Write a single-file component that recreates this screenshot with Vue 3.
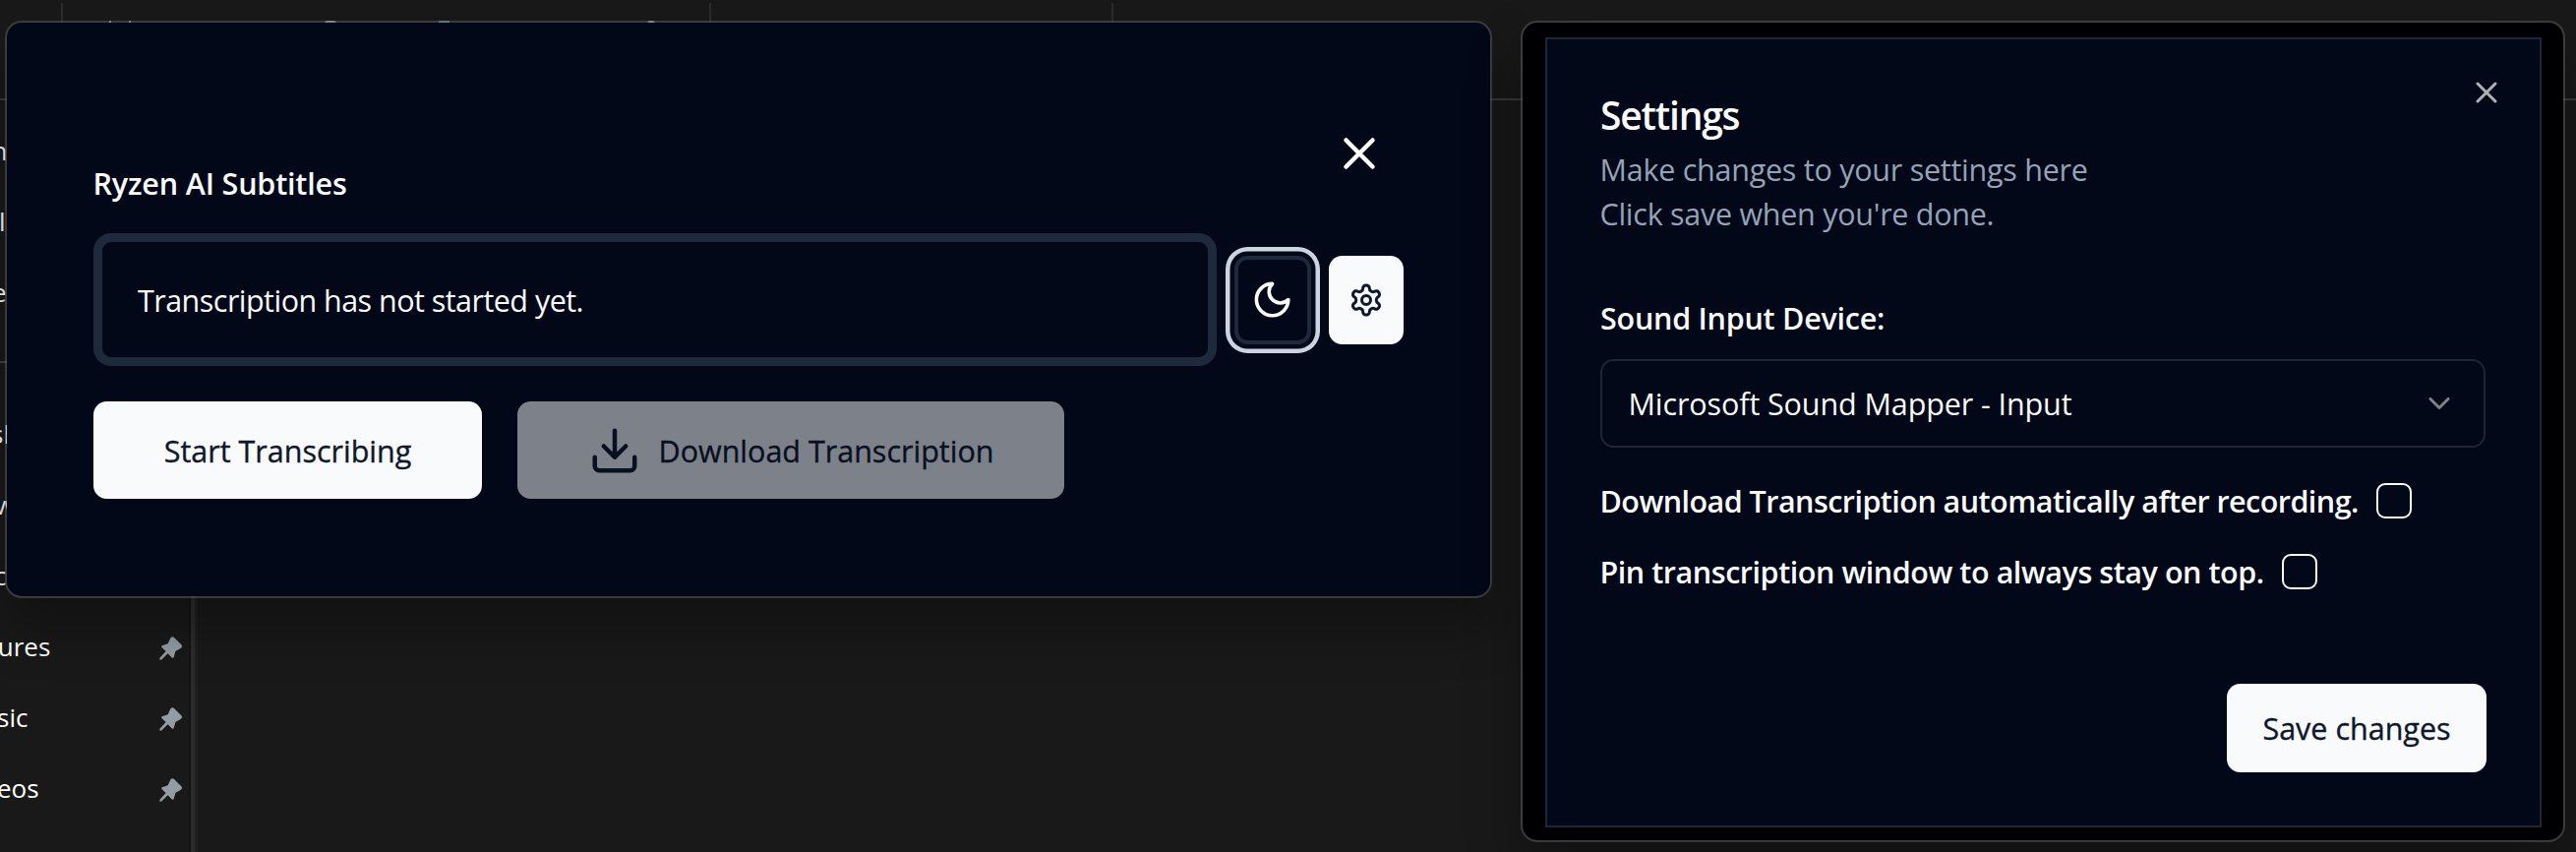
<script setup>
const places = [
  { label: 'n', shift: -8.5 },
  { label: 'l', shift: -1 },
  { label: 'e', shift: -8 },
  { label: '', shift: 0, rule: true },
  { label: 'sk', shift: -9 },
  { label: 'w', shift: -5 },
  { label: 'c', shift: -6 },
  { label: 'tures', shift: -11.5, pinned: true },
  { label: 'sic', shift: -3, pinned: true },
  { label: 'eos', shift: -3, pinned: true },
]
</script>

<template>
  <div class="desktop">
    <div class="toolbar">
      <i class="tick t1"></i><i class="tick t2"></i><i class="tick t3"></i>
      <i class="glyph g1"></i><i class="glyph g2"></i><i class="glyph g3"></i><i class="glyph g4"></i><i class="glyph g5"></i>
    </div>
    <nav class="places">
      <div v-for="(p, i) in places" :key="i" class="place" :class="{ rule: p.rule }">
        <span :style="{ marginLeft: p.shift + 'px' }">{{ p.label }}</span>
        <svg v-if="p.pinned" class="pin" viewBox="0 0 24 24">
          <path d="M11.3 1.5Q13 -.6 15 1L22.3 8.2Q24 10 22 11.8L16.4 15L14.8 20.8Q14 22.6 12.6 21.2L8.6 17.3L2.3 23.4Q.6 24 .4 23.3Q.1 22 .7 21.4L6.6 15L2.4 11Q1.4 9.4 3.4 8.9L8.6 7.3Z" />
        </svg>
      </div>
    </nav>

    <section class="window main-window">
      <header class="main-header">
        <h1>Ryzen AI Subtitles</h1>
        <svg class="icon close" viewBox="0 0 24 24"><path d="M18 6 6 18M6 6l12 12" /></svg>
      </header>
      <div class="caption-row">
        <div class="caption"><span>Transcription has not started yet.</span></div>
        <button class="theme">
          <svg class="icon moon" viewBox="0 0 24 24"><path d="M12 3a6 6 0 0 0 9 9 9 9 0 1 1-9-9Z" /></svg>
        </button>
        <button class="gear">
          <svg class="icon" viewBox="0 0 24 24">
            <path d="M12.22 2h-.44a2 2 0 0 0-2 2v.18a2 2 0 0 1-1 1.73l-.43.25a2 2 0 0 1-2 0l-.15-.08a2 2 0 0 0-2.73.73l-.22.38a2 2 0 0 0 .73 2.73l.15.1a2 2 0 0 1 1 1.72v.51a2 2 0 0 1-1 1.74l-.15.09a2 2 0 0 0-.73 2.73l.22.38a2 2 0 0 0 2.73.73l.15-.08a2 2 0 0 1 2 0l.43.25a2 2 0 0 1 1 1.73V20a2 2 0 0 0 2 2h.44a2 2 0 0 0 2-2v-.18a2 2 0 0 1 1-1.73l.43-.25a2 2 0 0 1 2 0l.15.08a2 2 0 0 0 2.73-.73l.22-.39a2 2 0 0 0-.73-2.73l-.15-.08a2 2 0 0 1-1-1.74v-.5a2 2 0 0 1 1-1.74l.15-.09a2 2 0 0 0 .73-2.73l-.22-.38a2 2 0 0 0-2.73-.73l-.15.08a2 2 0 0 1-2 0l-.43-.25a2 2 0 0 1-1-1.73V4a2 2 0 0 0-2-2z" />
            <circle cx="12" cy="12" r="3" />
          </svg>
        </button>
      </div>
      <div class="actions">
        <button class="btn start">Start Transcribing</button>
        <button class="btn download">
          <svg class="icon" viewBox="0 0 24 24"><path d="M21 15v4a2 2 0 0 1-2 2H5a2 2 0 0 1-2-2v-4M7 10l5 5 5-5M12 15V3" /></svg>
          <span>Download Transcription</span>
        </button>
      </div>
    </section>

    <section class="window settings-window">
      <div class="panel">
        <svg class="icon panel-close" viewBox="0 0 24 24"><path d="M18 6 6 18M6 6l12 12" /></svg>
        <h2>Settings</h2>
        <p class="desc"><span class="d1">Make changes to your settings here</span><br /><span class="d2">Click save when you're done.</span></p>
        <div class="field-label">Sound Input Device:</div>
        <div class="select">
          <span>Microsoft Sound Mapper - Input</span>
          <svg class="icon" viewBox="0 0 24 24"><path d="m6 9 6 6 6-6" /></svg>
        </div>
        <label class="check auto"><span>Download Transcription automatically after recording.</span><i class="box"></i></label>
        <label class="check top"><span>Pin transcription window to always stay on top.</span><i class="box"></i></label>
        <button class="btn save">Save changes</button>
      </div>
    </section>
  </div>
</template>

<style>
html, body { margin: 0; background: #191919; }
</style>

<style scoped>
* { box-sizing: border-box; }
.desktop {
  position: relative;
  width: 2619px;
  height: 866px;
  overflow: hidden;
  background: #191919;
  color: #f8fafc;
  font-family: "Open Sans", "Noto Sans", sans-serif;
  font-size: 30.5px;
  line-height: 45px;
}
button { font: inherit; letter-spacing: inherit; border: 0; margin: 0; padding: 0; white-space: nowrap; }
h1, h2, p { margin: 0; }
.icon { fill: none; stroke: currentColor; stroke-width: 2; stroke-linecap: round; stroke-linejoin: round; flex: none; display: block; }

/* File explorer behind the windows */
.toolbar { position: relative; height: 102px; border-bottom: 2px solid #3a3a3a; }
.tick { position: absolute; top: 3px; width: 2px; height: 20px; background: #2c2c2c; }
.t1 { left: 62px; }
.t2 { left: 721px; }
.t3 { left: 1130px; }
.glyph { position: absolute; top: 21px; height: 6px; background: #999; }
.g1 { left: 111px; width: 2px; }
.g2 { left: 131px; width: 2px; }
.g3 { left: 330px; width: 12px; border-radius: 4px; }
.g4 { left: 446px; width: 11px; background: #4f8296; }
.g5 { left: 658px; width: 8px; border-radius: 4px; }
.places {
  position: relative;
  width: 201px;
  height: 764px;
  padding-top: 15px;
  border-right: 3px solid #1f1f1f;
  box-shadow: inset -4px 0 0 #2c2c2c, inset -6px 0 0 #131313;
  overflow: hidden;
  font-size: 26px;
  color: #fff;
}
.place { height: 72px; display: flex; align-items: center; justify-content: space-between; padding: 0 12px 0 0; white-space: pre; }
.place.rule { background: linear-gradient(#444, #444) 0 34px / 100% 2px no-repeat; }
.pin { width: 24px; height: 24px; fill: #939ca2; flex: none; margin-top: 3px; }

.window {
  position: absolute;
  top: 21px;
  border: 2px solid rgba(110, 110, 110, .42);
  border-radius: 17px;
  background-clip: padding-box;
  box-shadow: 0 28px 56px rgba(0, 0, 0, .32);
}
.main-window { left: 5px; width: 1512px; height: 587px; padding: 106px 88px 0; background-color: #020817; }
.main-header { height: 108px; display: flex; align-items: flex-start; justify-content: space-between; padding-right: 18px; }
h1 { margin: 35px 0 0 -.5px; font-size: 30.5px; font-weight: 600; line-height: 45px; letter-spacing: -.18px; }
.close { width: 54px; height: 54px; color: #fff; }
.caption-row { display: flex; align-items: center; gap: 18px; }
.caption { width: 1142px; height: 135px; border: 9px solid #1e293b; border-radius: 18px; padding: 2px 36px 0; display: flex; align-items: center; letter-spacing: -.53px; }
.theme { width: 78px; height: 90px; border: 4px solid #1e293b; border-radius: 13.5px; background: #020817; color: #fff; display: grid; place-items: center; box-shadow: 0 0 0 4.5px #020817, 0 0 0 9px #cbd5e1; }
.moon { width: 43.2px; height: 43.2px; }
.gear { width: 76px; height: 90px; border-radius: 13.5px; background: #f8fafc; color: #0f172a; display: grid; place-items: center; }
.gear .icon { width: 36px; height: 36px; }
.actions { margin-top: 36px; display: flex; gap: 36px; }
.btn { background: #f8fafc; color: #0f172a; border-radius: 13.5px; display: flex; align-items: center; justify-content: center; -webkit-text-stroke: .35px currentColor; }
.start { width: 395px; height: 99px; padding-top: 1px; }
.download { width: 556px; height: 99px; gap: 18px; opacity: .5; }
.download span { padding-top: 1px; }
.download .icon { width: 54px; height: 54px; }

.settings-window { left: 1546px; width: 1062px; height: 835px; padding: 15px 22px 13px 23px; background-color: #000003; }
.panel { position: relative; height: 803px; border: 2px solid #1b2637; background: #020817; padding: 57px 54px 0; display: flex; flex-direction: column; align-items: flex-start; }
.panel-close { position: absolute; top: 36px; right: 36px; width: 36px; height: 36px; opacity: .7; }
h2 { font-size: 39px; font-weight: 600; line-height: 40px; letter-spacing: -1.2px; }
.desc { margin: 12.5px 0 0 -.5px; color: #94a3b8; }
.d1 { letter-spacing: -.25px; }
.d2 { letter-spacing: -.27px; }
.field-label { margin-top: 61.5px; font-weight: 600; letter-spacing: -.25px; }
.select { margin-top: 19px; width: 900px; height: 90px; border: 2px solid #1b2637; border-radius: 13.5px; padding: 0 27.5px 0 26.5px; display: flex; align-items: center; justify-content: space-between; letter-spacing: -.1px; }
.select .icon { width: 36px; height: 36px; opacity: .5; }
.check { height: 36px; display: flex; align-items: center; gap: 18px; font-weight: 600; margin-left: -.5px; white-space: nowrap; }
.check span { padding-top: 2px; }
.auto { margin-top: 35.5px; letter-spacing: -.54px; }
.top { margin-top: 36px; letter-spacing: -.45px; }
.box { width: 36px; height: 36px; border: 2px solid #f8fafc; border-radius: 9px; flex: none; }
.save { align-self: flex-end; margin-top: 96px; width: 264px; height: 90px; padding-top: 2px; }
</style>
